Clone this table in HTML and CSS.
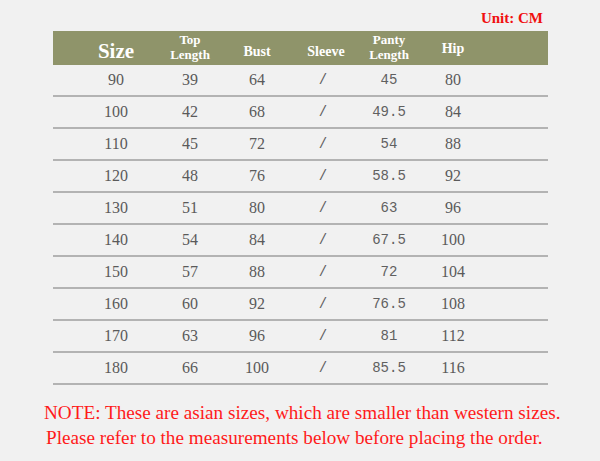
FILE: index.html
```html
<!DOCTYPE html>
<html>
<head>
<meta charset="utf-8">
<link rel="stylesheet" href="styles.css">
</head>
<body>
<div class="page">
  <div class="unit">Unit: CM</div>
  <div class="table">
    <div class="row head">
      <div class="c c1 big">Size</div>
      <div class="c c2 two"><span class="ln">Top</span><span class="ln">Length</span></div>
      <div class="c c3 low">Bust</div>
      <div class="c c4 low">Sleeve</div>
      <div class="c c5 two"><span class="ln">Panty</span><span class="ln">Length</span></div>
      <div class="c c6 mid">Hip</div>
    </div>
    <div class="row"><div class="c c1">90</div><div class="c c2">39</div><div class="c c3">64</div><div class="c c4 mono">/</div><div class="c c5 mono">45</div><div class="c c6">80</div></div>
    <div class="row"><div class="c c1">100</div><div class="c c2">42</div><div class="c c3">68</div><div class="c c4 mono">/</div><div class="c c5 mono">49.5</div><div class="c c6">84</div></div>
    <div class="row"><div class="c c1">110</div><div class="c c2">45</div><div class="c c3">72</div><div class="c c4 mono">/</div><div class="c c5 mono">54</div><div class="c c6">88</div></div>
    <div class="row"><div class="c c1">120</div><div class="c c2">48</div><div class="c c3">76</div><div class="c c4 mono">/</div><div class="c c5 mono">58.5</div><div class="c c6">92</div></div>
    <div class="row"><div class="c c1">130</div><div class="c c2">51</div><div class="c c3">80</div><div class="c c4 mono">/</div><div class="c c5 mono">63</div><div class="c c6">96</div></div>
    <div class="row"><div class="c c1">140</div><div class="c c2">54</div><div class="c c3">84</div><div class="c c4 mono">/</div><div class="c c5 mono">67.5</div><div class="c c6">100</div></div>
    <div class="row"><div class="c c1">150</div><div class="c c2">57</div><div class="c c3">88</div><div class="c c4 mono">/</div><div class="c c5 mono">72</div><div class="c c6">104</div></div>
    <div class="row"><div class="c c1">160</div><div class="c c2">60</div><div class="c c3">92</div><div class="c c4 mono">/</div><div class="c c5 mono">76.5</div><div class="c c6">108</div></div>
    <div class="row"><div class="c c1">170</div><div class="c c2">63</div><div class="c c3">96</div><div class="c c4 mono">/</div><div class="c c5 mono">81</div><div class="c c6">112</div></div>
    <div class="row"><div class="c c1">180</div><div class="c c2">66</div><div class="c c3">100</div><div class="c c4 mono">/</div><div class="c c5 mono">85.5</div><div class="c c6">116</div></div>
  </div>
  <div class="note">
    <div class="l1">NOTE: These are asian sizes, which are smaller than western sizes.</div>
    <div class="l2">Please refer to the measurements below before placing the order.</div>
  </div>
</div>
</body>
</html>
```
FILE: styles.css
```css
html, body {
  margin: 0;
  padding: 0;
  background: #f1f1f1;
}
.page {
  width: 600px;
  height: 461px;
  box-sizing: border-box;
  padding-top: 9px;
  font-family: "Liberation Serif", "Times New Roman", serif;
}
.unit {
  width: 543px;
  text-align: right;
  color: #f01010;
  font-weight: bold;
  font-size: 15px;
  line-height: 18px;
  height: 22px;
}
.table {
  margin-left: 53px;
  width: 495px;
}
.row {
  display: grid;
  grid-template-columns: 26px 74px 74px 60px 78px 48px 80px 1fr;
  height: 30px;
  border-bottom: 2px solid #b3b3b3;
  color: #5a5a5a;
  font-size: 16px;
  align-items: center;
}
.row .c {
  text-align: center;
  white-space: nowrap;
}
.c1 { grid-column: 2; }
.c2 { grid-column: 3; }
.c3 { grid-column: 4; }
.c4 { grid-column: 5; }
.c5 { grid-column: 6; }
.c6 { grid-column: 7; }
.mono {
  font-family: "Liberation Mono", "Courier New", monospace;
  font-size: 14px;
  color: #606060;
}
.row .c4.mono { padding-right: 6px; }
.row.head {
  height: 34px;
  background: #8f946a;
  border-bottom: none;
  color: #ffffff;
  font-weight: bold;
}
.head .big {
  font-size: 21px;
  line-height: 24px;
  padding-top: 5px;
}
.head .two {
  font-size: 13px;
  display: flex;
  flex-direction: column;
  align-items: center;
  padding-bottom: 2px;
}
.head .ln {
  display: block;
  line-height: 15px;
  height: 15px;
}
.head .low {
  font-size: 14px;
  line-height: 16px;
  padding-top: 8px;
}
.head .mid {
  font-size: 14px;
  line-height: 16px;
  padding-top: 2px;
}
.note {
  margin-top: 15px;
  color: #ff1a1a;
  font-size: 19.2px;
  line-height: 25px;
}
.l1 { padding-left: 44px; }
.l2 { padding-left: 46px; }
```
